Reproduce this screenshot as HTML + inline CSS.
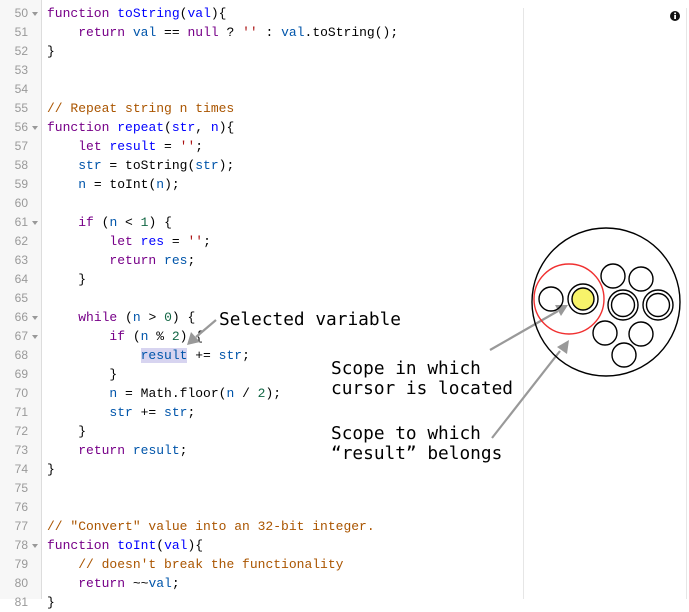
<!DOCTYPE html>
<html><head><meta charset="utf-8"><style>
body{margin:0;width:689px;height:599px;overflow:hidden;background:#fff;position:relative;font-family:"Liberation Mono",monospace}
#gut{position:absolute;left:0;top:0;width:41px;height:599px;background:#f7f7f7;border-right:1px solid #ddd}
.ln{position:absolute;left:0;width:28px;text-align:right;font-size:12px;color:#999;height:19px;line-height:19px;font-family:"Liberation Sans",sans-serif}
.ar{position:absolute;left:32px;width:0;height:0;border-left:3.5px solid transparent;border-right:3.5px solid transparent;border-top:4px solid #999}
.cl{position:absolute;left:47px;font-size:13px;height:19px;line-height:19px;white-space:pre;color:#000}
.k{color:#708}.d{color:#00f}.v{color:#05a}.c{color:#a50}.s{color:#a11}.n{color:#164}
.sel{background:#d7d4f0}
.ann{position:absolute;font-family:"DejaVu Sans Mono",monospace;font-size:17.8px;color:#000;white-space:pre;line-height:20px}
</style></head><body>
<div id="gut"></div>
<div style="position:absolute;left:523px;top:8px;width:1px;height:591px;background:#e6e6e6"></div>
<div style="position:absolute;left:686px;top:8px;width:1px;height:591px;background:#e6e6e6"></div>
<svg style="position:absolute;left:669px;top:10px" width="12" height="12"><circle cx="6" cy="6" r="5" fill="#111"/><rect x="5.2" y="5" width="1.8" height="4" fill="#fff"/><circle cx="6.1" cy="3.4" r="1" fill="#fff"/></svg>

<div id="code"></div>
<script>
var L=[
['50',1,'<span class="k">function</span> <span class="d">toString</span>(<span class="d">val</span>){'],
['51',0,'    <span class="k">return</span> <span class="v">val</span> == <span class="k">null</span> ? <span class="s">\'\'</span> : <span class="v">val</span>.toString();'],
['52',0,'}'],
['53',0,''],['54',0,''],
['55',0,'<span class="c">// Repeat string n times</span>'],
['56',1,'<span class="k">function</span> <span class="d">repeat</span>(<span class="d">str</span>, <span class="d">n</span>){'],
['57',0,'    <span class="k">let</span> <span class="d">result</span> = <span class="s">\'\'</span>;'],
['58',0,'    <span class="v">str</span> = toString(<span class="v">str</span>);'],
['59',0,'    <span class="v">n</span> = toInt(<span class="v">n</span>);'],
['60',0,''],
['61',1,'    <span class="k">if</span> (<span class="v">n</span> &lt; <span class="n">1</span>) {'],
['62',0,'        <span class="k">let</span> <span class="d">res</span> = <span class="s">\'\'</span>;'],
['63',0,'        <span class="k">return</span> <span class="v">res</span>;'],
['64',0,'    }'],
['65',0,''],
['66',1,'    <span class="k">while</span> (<span class="v">n</span> &gt; <span class="n">0</span>) {'],
['67',1,'        <span class="k">if</span> (<span class="v">n</span> % <span class="n">2</span>) {'],
['68',0,'            <span class="v sel">result</span> += <span class="v">str</span>;'],
['69',0,'        }'],
['70',0,'        <span class="v">n</span> = Math.floor(<span class="v">n</span> / <span class="n">2</span>);'],
['71',0,'        <span class="v">str</span> += <span class="v">str</span>;'],
['72',0,'    }'],
['73',0,'    <span class="k">return</span> <span class="v">result</span>;'],
['74',0,'}'],
['75',0,''],['76',0,''],
['77',0,'<span class="c">// "Convert" value into an 32-bit integer.</span>'],
['78',1,'<span class="k">function</span> <span class="d">toInt</span>(<span class="d">val</span>){'],
['79',0,'    <span class="c">// doesn\'t break the functionality</span>'],
['80',0,'    <span class="k">return</span> ~~<span class="v">val</span>;'],
['81',0,'}']];
var h='';
L.forEach(function(l,i){var t=3.5+i*19;
h+='<div class="ln" style="top:'+t+'px">'+l[0]+'</div>';
if(l[1])h+='<div class="ar" style="top:'+(t+8)+'px"></div>';
h+='<div class="cl" style="top:'+t+'px">'+l[2]+'</div>';});
document.getElementById('code').innerHTML=h;
</script>

<div class="ann" style="left:219px;top:310px">Selected variable</div>
<div class="ann" style="left:331px;top:359px">Scope in which
cursor is located</div>
<div class="ann" style="left:331px;top:424px">Scope to which
“result” belongs</div>

<svg style="position:absolute;left:0;top:0" width="689" height="599">
<g stroke="#999" stroke-width="2.2" fill="none">
<line x1="216" y1="320" x2="196" y2="337"/>
<line x1="490" y1="350" x2="558" y2="311"/>
<line x1="492" y1="438" x2="560" y2="351"/>
</g>
<g fill="#999">
<path d="M187,345 L191,332 L200,342 z"/>
<path d="M568,305 L555,305 L561,316 z"/>
<path d="M569,340 L557,347 L567,354 z"/>
</g>
<g stroke="#000" stroke-width="1.4" fill="none">
<circle cx="606" cy="302" r="74"/>
<circle cx="551" cy="299" r="12"/>
<circle cx="583" cy="299" r="15"/>
<circle cx="583" cy="299" r="11" fill="#f7f36a"/>
<circle cx="613" cy="276" r="12"/>
<circle cx="641" cy="279" r="12"/>
<circle cx="623" cy="305" r="15"/>
<circle cx="623" cy="305" r="11.5"/>
<circle cx="658" cy="305" r="15"/>
<circle cx="658" cy="305" r="11.5"/>
<circle cx="605" cy="333" r="12"/>
<circle cx="641" cy="334" r="12"/>
<circle cx="624" cy="355" r="12"/>
</g>
<circle cx="569" cy="299" r="35" stroke="#f03030" stroke-width="1.4" fill="none"/>
</svg>
</body></html>
